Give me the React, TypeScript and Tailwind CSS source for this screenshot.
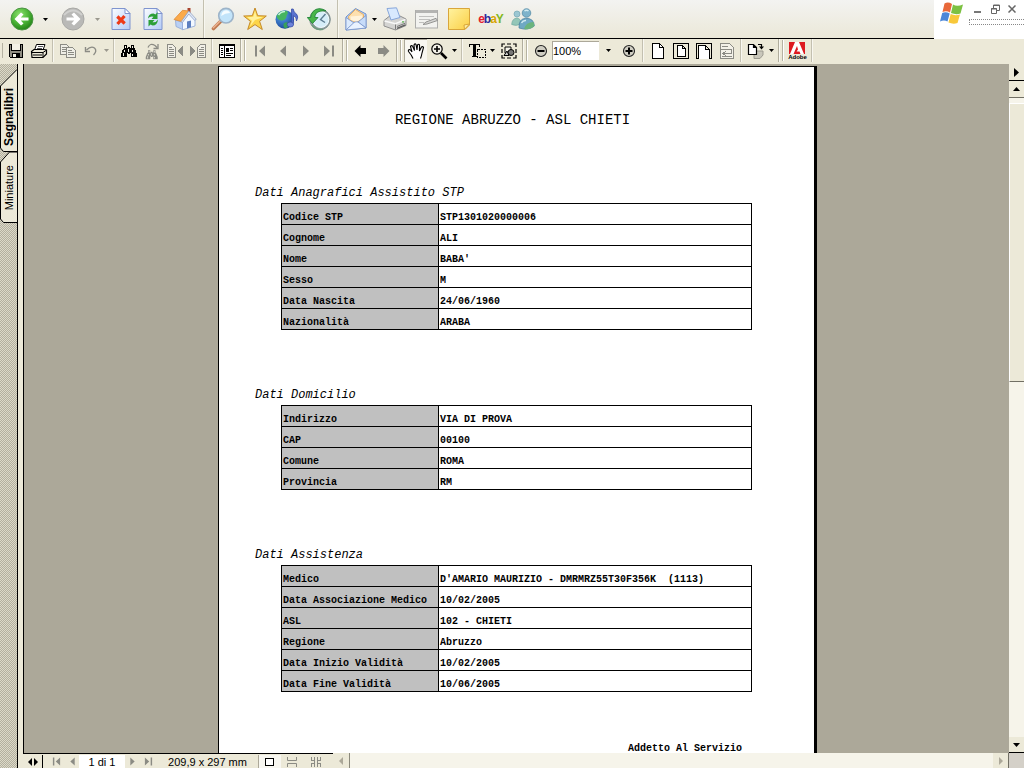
import React, { ReactNode } from "react";

const Svg = ({ s = 24, crisp = false, children }: { s?: number; crisp?: boolean; children: ReactNode }) => (
  <svg
    width={s}
    height={s}
    viewBox={`0 0 ${s} ${s}`}
    fill="none"
    shapeRendering={crisp ? "crispEdges" : "auto"}
    className="shrink-0"
    aria-hidden="true"
  >
    {children}
  </svg>
);

/* Large browser icons, 24px */

const arrow = "M4.500 12 L11 5.500 L13.500 7.500 L10.800 10.500 H18.500 V13.500 H10.800 L13.500 16.500 L11 18.500 Z";

const BackIcon = () => (
  <Svg>
    <defs>
      <radialGradient id="green" cx=".4" cy=".3" r=".75">
        <stop offset="0" stopColor="#8ee070" />
        <stop offset=".5" stopColor="#4fb83a" />
        <stop offset="1" stopColor="#1e7d12" />
      </radialGradient>
    </defs>
    <circle cx="12" cy="12" r="11" fill="url(#green)" stroke="#4c9444" strokeWidth="1" />
    <path d={arrow} fill="#fff" />
  </Svg>
);

const ForwardIcon = () => (
  <Svg>
    <circle cx="12" cy="12" r="11" fill="#b9b9b7" stroke="#a9a9a6" />
    <path d="M3 8 Q12 -1 21 8" stroke="#d0d0ce" strokeWidth="2" />
    <path d={arrow} fill="#fff" transform="matrix(-1 0 0 1 24 0)" />
  </Svg>
);

const Sheet = () => (
  <>
    <defs>
      <linearGradient id="sheet" x1="0" y1="0" x2="1" y2="1">
        <stop offset="0" stopColor="#fbfdff" />
        <stop offset="1" stopColor="#b4cbf7" />
      </linearGradient>
    </defs>
    <path d="M3 1.500 H16 L21 6.500 V22.500 H3 Z" fill="url(#sheet)" stroke="#7f94cf" />
    <path d="M16 1.500 V6.500 H21 Z" fill="#fff" stroke="#7f94cf" />
  </>
);

const StopIcon = () => (
  <Svg>
    <Sheet />
    <path d="M8.300 9.500 L15.700 16.500 M15.500 9 L8.500 17" stroke="#ee3a17" strokeWidth="3.200" />
  </Svg>
);

const RefreshIcon = () => (
  <Svg>
    <Sheet />
    <path d="M7 11.500 Q7.500 6.500 12.500 6.500 L14.500 7.500 L16.500 5 V12 H10.500 L12.500 9.800 Q9 9 7 11.500 Z" fill="#2c9f38" />
    <path d="M17 12.500 Q16.500 18.500 11.500 18.500 L9.500 17.500 L7.500 19.500 V13 H13.500 L11.500 15.200 Q15 16 17 12.500 Z" fill="#2c9f38" />
  </Svg>
);

const HomeIcon = () => (
  <Svg>
    <path d="M2.500 13 L9.500 15.500 V22.500 L3 19.500 Z" fill="#b9d0f4" stroke="#8ba5d5" strokeWidth=".8" />
    <path d="M9.500 15 L16 6.500 L22 12.500 V19 L9.500 22.800 Z" fill="#f3f8ff" stroke="#8ba5d5" strokeWidth=".8" />
    <path d="M14.500 1 H17.500 V6 H14.500 Z" fill="#a8442f" />
    <path d="M9.500 3.300 L16 4 L8.800 14.500 L1 12.500 Z" fill="#fbaa4a" stroke="#e08a35" strokeWidth=".8" />
    <path d="M15.800 4 L23.300 12.300 L21.500 13.300 L15.800 7 L9.300 15.500 L8.300 14.500 Z" fill="#dfe7f5" stroke="#8a9cc2" strokeWidth=".7" />
    <path d="M14 14.500 L18 13.500 V20.200 L14 21.400 Z" fill="#5d7fc0" />
  </Svg>
);

const SearchIcon = () => (
  <Svg>
    <path d="M10 14 L2.500 21.500" stroke="#c07a50" strokeWidth="3.600" strokeLinecap="round" />
    <path d="M9.500 13.700 L2.300 20.800" stroke="#ecb492" strokeWidth="1.400" strokeLinecap="round" />
    <circle cx="15" cy="8.700" r="7.300" fill="#c2e4fa" stroke="#9db4c9" strokeWidth="1.600" />
    <path d="M10.200 9 Q10.500 4 15 3.300 Q18.500 3.800 19 6 Q14 6 10.200 9" fill="#f5fcff" />
  </Svg>
);

const StarIcon = () => (
  <Svg>
    <path d="M12 1 L14.700 8.700 L23.300 9 L16.600 14.300 L19.300 22.500 L12 17.600 L4.700 22.500 L7.400 14.300 L.7 9 L9.300 8.700 Z" fill="#fdd548" stroke="#c48a2a" strokeLinejoin="round" />
    <path d="M12 4 L13.700 9.700 L20 10.300 L12 13 L7 19.500 L9 13.700 L4 10.300 L10.300 9.700 Z" fill="#fff19c" />
  </Svg>
);

const MediaIcon = () => (
  <Svg>
    <defs>
      <radialGradient id="globe" cx=".35" cy=".3" r=".8">
        <stop offset="0" stopColor="#58a3ec" />
        <stop offset="1" stopColor="#153f94" />
      </radialGradient>
    </defs>
    <circle cx="9.800" cy="12.500" r="9.300" fill="url(#globe)" />
    <path d="M1.500 9 Q5 2.500 12 4 Q14 6 11.500 8.500 Q12 12 7.500 13.500 Q3 14 1.500 9" fill="#45b560" />
    <path d="M9 16 Q13 14 14.500 17 Q13 21 10 21.500 Q7.500 19 9 16" fill="#39a05a" />
    <path d="M3.500 8 Q6 4.500 10 4.500" stroke="#c8f3d8" strokeWidth="1.600" />
    <path d="M16.500 17 V2 H18.200 Q18.500 5.500 21.500 7 Q24 9.500 21.500 14 Q21.800 10 18.300 8.500 V17.500 Z" fill="#5a73cf" stroke="#3a4fa8" strokeWidth=".8" />
    <ellipse cx="15.300" cy="17.500" rx="3.200" ry="2.500" fill="#6d83da" stroke="#3a4fa8" strokeWidth=".8" />
  </Svg>
);

const HistoryIcon = () => (
  <Svg>
    <circle cx="13" cy="12.500" r="10.300" fill="#8f9ea0" stroke="#7b8c8d" />
    <circle cx="13.800" cy="12.500" r="8" fill="#d6edf8" stroke="#f4fbfd" />
    <path d="M18.500 7 L13.500 12.500 L18 15.500" stroke="#5d7d92" strokeWidth="1.400" />
    <path d="M19 3.800 Q11 -.8 6 4.500 Q3.500 7.500 3.800 10.500 H.3 L5.500 16.500 L11 10.500 H7.800 Q8 5.500 13 4.200 Q16 3.600 19 3.800 Z" fill="#48b649" stroke="#24863a" strokeWidth=".9" />
    <path d="M5 18 Q9 23.500 16 22.300" stroke="#6f9d7f" strokeWidth="1.500" />
  </Svg>
);

const MailIcon = () => (
  <Svg>
    <path d="M2 10 L11.500 1.500 L22 7 V21 L2 23 Z" fill="#b6d2f6" stroke="#7091c9" />
    <path d="M4.500 9.500 L11.500 2.500 L19.500 7.500 V11.500 L12.500 15 L5 13 Z" fill="#fde0b0" stroke="#eab063" />
    <path d="M6.500 9.500 L18 8.500 V12 L12 15 L7 13 Z" fill="#fff3dc" />
    <path d="M2 10.500 L10 16 L2 23 Z" fill="#dcebfd" stroke="#7895cc" strokeWidth=".8" />
    <path d="M22 8.500 L14 15 L22 21 Z" fill="#c7dcf9" stroke="#7895cc" strokeWidth=".8" />
    <path d="M2 23 L10 15.500 Q12 14.300 14 15 L22 21 Z" fill="#eaf3ff" stroke="#7895cc" strokeWidth=".8" />
  </Svg>
);

const PrinterIcon = () => (
  <Svg>
    <path d="M1 13.500 L6 9.500 L17 9 L23 12 V18.500 L12.500 23 L1 19 Z" fill="#d4d4d2" stroke="#8f8f8f" />
    <path d="M4 1.500 L13.500 .8 L17 10.500 L8 13 Z" fill="#d8e9fe" stroke="#87a6da" />
    <path d="M1.500 14 L12.500 16.800 L22.500 12.500" stroke="#f8f8f8" strokeWidth="1.500" />
    <path d="M12.500 17.500 V22.500 M14 19.500 L22 16.300" stroke="#7a7a7a" />
    <path d="M14 21.300 L22.500 17.800" stroke="#5d5d5d" strokeWidth="1.300" />
    <circle cx="20" cy="14.800" r=".9" fill="#55b34b" />
  </Svg>
);

const EditIcon = () => (
  <Svg>
    <rect x=".500" y="3.500" width="22" height="17.500" fill="#f2f2ef" stroke="#adadab" />
    <rect x="1" y="3" width="21" height="3" fill="#b4b4b2" />
    <path d="M4 9.500 H19 M4 12.500 H15 M4 15.500 H9" stroke="#c0c0be" />
    <path d="M8 17.500 L11 15 L21 11.300 L22.500 13.500 L12 17 Z" fill="#d5d5d3" stroke="#8b8b89" strokeWidth=".9" />
  </Svg>
);

const NoteIcon = () => (
  <Svg>
    <defs>
      <linearGradient id="note" x1="0" y1="0" x2="1" y2="1">
        <stop offset="0" stopColor="#fff3a0" />
        <stop offset="1" stopColor="#fbcf45" />
      </linearGradient>
    </defs>
    <path d="M1.500 1.500 H22.500 V18 L18 22.500 H1.500 Z" fill="url(#note)" stroke="#d9a63a" />
    <path d="M22.500 17 L17 18 L17.500 22.500 Z" fill="#fff0a5" stroke="#d9a63a" />
  </Svg>
);

const EbayIcon = () => (
  <span className="flex font-['Liberation_Sans',sans-serif] text-[12px] leading-4 font-bold" aria-hidden="true">
    <span className="text-[#e4202c]">e</span>
    <span className="-ml-px text-[#2b2b9b]">b</span>
    <span className="-ml-px text-[#d8a400]">a</span>
    <span className="-ml-px text-[#83b81a]">Y</span>
  </span>
);

const MessengerIcon = () => (
  <Svg>
    <circle cx="6" cy="7" r="3" fill="#9cc7d2" stroke="#75a7b5" strokeWidth=".7" />
    <path d="M.7 17.500 Q1 11.500 6 11 Q10 11.500 10 17 Q5 19.500 .7 17.500" fill="#94c6b8" stroke="#72aaa0" strokeWidth=".7" />
    <circle cx="15.500" cy="6" r="4.300" fill="#7eb3cb" stroke="#4f87a2" strokeWidth=".7" />
    <path d="M8 21 Q7.500 12 14.500 11.300 Q23 11 23.300 19 Q17 24 8 21" fill="#6fa9c4" stroke="#447b9c" strokeWidth=".7" />
    <path d="M13.500 4 Q15.500 2.300 17.500 4 M10.500 16 Q12 13.300 15 13.500" stroke="#d3ecf2" strokeWidth="1.400" />
    <path d="M13 22 Q15 15 22.500 15 Q24 18 22.500 20 Q18 23 13 22" fill="#6bb47d" />
  </Svg>
);

/* Small document toolbar icons, 18px */

const K = "#000";
const G = "#8b8b84";

const Small = ({ children, crisp = true }: { children: ReactNode; crisp?: boolean }) => (
  <Svg s={18} crisp={crisp}>{children}</Svg>
);

const SaveIcon = () => (
  <Small>
    <path d="M2 2 H16 V16 H3 L2 15 Z" fill={K} />
    <path d="M3 3 H4 V9 H14 V3 H15 V15 H3 Z" fill="#8f8d82" />
    <rect x="5" y="2" width="8" height="6" fill="#f4f2e6" />
    <path d="M4 8.500 H14 M4.500 2 V9 M13.500 2 V9" stroke={K} />
    <rect x="5" y="11" width="8" height="4" fill={K} />
    <rect x="6" y="12" width="3" height="3" fill="#f4f2e6" />
  </Small>
);
const PrintIcon = () => (
  <Small crisp={false}>
    <path d="M6.500 2.500 H15 L13 8 H4.500 Z" fill="#fff" stroke={K} />
    <path d="M8 4.500 H13 M7 6.500 H12" stroke="#555" />
    <path d="M1.500 9.500 L4 7.500 H14 L16.500 8 V12 L13 15.500 H2 Z" fill="#ece9d8" stroke={K} strokeWidth="1.200" />
    <path d="M2 10.500 H13 L16 8.500 M3 13 H12 M13 10.500 V15" stroke={K} />
  </Small>
);
const CopyIcon = () => (
  <Small>
    <path d="M1.500 2.500 H7.500 L10.500 5.500 V12.500 H1.500 Z" stroke={G} fill="#efeee6" />
    <path d="M3 5.500 H7 M3 7.500 H7 M3 9.500 H7" stroke={G} />
    <path d="M7.500 5.500 H13.500 L16.500 8.500 V15.500 H7.500 Z" stroke={G} fill="#efeee6" />
    <path d="M9 8.500 H13 M9 10.500 H15 M9 12.500 H15" stroke={G} />
  </Small>
);
const UndoIcon = () => (
  <Small crisp={false}>
    <path d="M4.500 8 Q9 3.500 12.500 6 Q15.500 9 11.500 13" stroke={G} strokeWidth="1.300" />
    <path d="M3.500 5 V9.500 H8" stroke={G} strokeWidth="1.400" />
  </Small>
);
const Binoculars = ({ c }: { c: string }) => (
  <>
    <path d="M4 3 H7 V6 H8 V5 H10 V6 H11 V3 H14 V6 L15 7 L17 12 V15 H11 V11 H10 V12 H8 V11 H7 V15 H1 V12 L3 7 L4 6 Z" fill={c} />
    <path d="M5.500 4 V6 M12.500 4 V6 M4.500 8 V10 M3.500 11 V14 M12.500 8 V10 M12.500 12 V14 M8.500 7 V10" stroke="#f3f1e5" />
  </>
);
const FindIcon = () => <Small><Binoculars c={K} /></Small>;
const FindNextIcon = () => (
  <Small crisp={false}>
    <g transform="translate(2 6) scale(.75)"><Binoculars c={G} /></g>
    <path d="M5 5.500 Q7 .5 12 3.500 L14 5.500 M15 2 V6.500 H10.500" stroke={G} strokeWidth="1.300" />
  </Small>
);
const ResultDoc = ({ flip = false }: { flip?: boolean }) => (
  <Small>
    <g transform={flip ? "matrix(-1 0 0 1 18 0)" : undefined}>
      <path d="M1.500 2.500 H6.500 L9.500 5.500 V15.500 H1.500 Z" stroke={G} fill="#f1efe6" />
      <path d="M3 5.500 H6 M3 7.500 H8 M3 9.500 H8 M3 11.500 H8 M3 13.500 H8" stroke={G} />
      <path d="M17 4 V14 L11 9 Z" fill={G} />
    </g>
  </Small>
);
const PanelIcon = () => (
  <Small>
    <rect x="1.500" y="2.500" width="15" height="13" fill="#fff" stroke={K} />
    <path d="M1 3.500 H17 M6.500 3 V15 M3 6.500 H5 M3 8.500 H5 M3 10.500 H5 M3 12.500 H5 M8 11.500 H15 M8 13.500 H13 M12 6.500 H15 M12 8.500 H15" stroke={K} />
    <rect x="8" y="6" width="3" height="4" fill={K} />
  </Small>
);
const NavIcon = ({ bar = false, flip = false, s = 18 }: { bar?: boolean; flip?: boolean; s?: number }) => (
  <svg width={s} height={s} viewBox="0 0 18 18" className="shrink-0" aria-hidden="true">
    <g transform={flip ? "matrix(-1 0 0 1 18 0)" : undefined} fill={G}>
      {bar ? <path d="M4 3.500 H6 V14.500 H4 Z M14 3.500 V14.500 L8 9 Z" /> : <path d="M12 3.500 V14.500 L6 9 Z" />}
    </g>
  </svg>
);
const BigArrow = ({ c, flip = false }: { c: string; flip?: boolean }) => (
  <Small crisp={false}>
    <path d="M2.500 9 L8.500 3 V6 H14 V12 H8.500 V15 Z" fill={c} transform={flip ? "matrix(-1 0 0 1 18 0)" : undefined} />
  </Small>
);
const HandIcon = () => (
  <Small crisp={false}>
    <path
      d="M6 16.500 Q5 13.500 1.500 9.500 Q1 7.500 2.500 7.500 Q4 8 5 10 L3.500 4.500 Q4 3 5.500 4 L7.500 8.500 L7 3 Q8 1 9 2.500 L10 8 L10.500 3 Q12 1.500 12.500 3 L12.500 9 L14.500 5 Q16 4 16.500 5.500 L15 11 Q14.500 14 13.500 16.500"
      fill="#fff" stroke={K} strokeWidth="1.100"
    />
  </Small>
);
const ZoomIcon = () => (
  <Small crisp={false}>
    <circle cx="7" cy="7" r="5.200" fill="#f5f3ea" stroke={K} strokeWidth="1.200" />
    <path d="M4 7 H10 M7 4 V10" stroke={K} strokeWidth="1.600" />
    <path d="M11 11 L16.500 16.500" stroke={K} strokeWidth="2.600" />
  </Small>
);
const TextSelectIcon = () => (
  <Small>
    <path d="M1 2 H12 V5 H11 V3 H8 V14 H9 V15 H4 V14 H5 V3 H2 V5 H1 Z" fill={K} />
    <rect x="9.500" y="7.500" width="8" height="8" stroke={K} strokeDasharray="2 1" />
  </Small>
);
const SnapshotIcon = () => (
  <Small crisp={false}>
    <path d="M2 5 V2 H5 M7 2 H11 M13 2 H16 V5 M16 7 V11 M16 13 V16 H13 M11 16 H7 M5 16 H2 V13 M2 11 V7" stroke={K} strokeWidth="1.200" />
    <path d="M5 5 H11 V11 H5 Z" fill="#f5f3ea" stroke={K} />
    <circle cx="11" cy="10.500" r="3" fill="#777" stroke={K} />
    <path d="M4 13.500 L7 9 L9 13.500 Z" fill="#ccc" stroke={K} />
  </Small>
);
const RoundIcon = ({ plus = false }: { plus?: boolean }) => (
  <Small crisp={false}>
    <circle cx="9" cy="9" r="5.500" fill="#cfcdc2" stroke="#222" strokeWidth="1.100" />
    <path d="M5.500 9 H12.500" stroke={K} strokeWidth="2" />
    {plus && <path d="M9 5.500 V12.500" stroke={K} strokeWidth="2" />}
  </Small>
);
const PageIcon = () => (
  <Small>
    <path d="M3.500 1.500 H10.500 L14.500 5.500 V16.500 H3.500 Z" fill="#fff" stroke={K} />
    <path d="M10.500 1.500 V5.500 H14.500" stroke={K} />
  </Small>
);
const FitPageIcon = () => (
  <Small>
    <rect x="1.500" y="1.500" width="15" height="15" fill="#ece9d8" stroke={K} />
    <path d="M5.500 3.500 H10.500 L13.500 6.500 V14.500 H5.500 Z M10.500 3.500 V6.500 H13.500" fill="#fff" stroke={K} />
  </Small>
);
const FitWidthIcon = () => (
  <Small>
    <rect x="1.500" y="1.500" width="15" height="15" fill="#ece9d8" stroke={K} />
    <path d="M3.500 16.500 V3.500 H10.500 L14.500 7.500 V16.500 M10.500 3.500 V7.500 H14.500" fill="#fff" stroke={K} />
  </Small>
);
const ReflowIcon = () => (
  <Small>
    <path d="M2.500 1.500 H11.500 L15.500 5.500 V16.500 H2.500 Z" fill="#f3f1e8" stroke={G} />
    <path d="M4 4.500 H10 M2 7.500 H13 V11.500 H6 M8 9 L5 11.500 L8 14 M4 14.500 H14" stroke={G} />
  </Small>
);
const RotateIcon = () => (
  <Small crisp={false}>
    <path d="M7 9 H16 V13 L13 16.500 H7 Z" fill="#c9c7bb" stroke="#9d9b91" />
    <path d="M1.500 2.500 H6.500 L9.500 5.500 V12.500 H1.500 Z M6.500 2.500 V5.500 H9.500" fill="#fff" stroke={K} strokeWidth="1.200" />
    <path d="M11 2.500 H14.500 V5" stroke={K} strokeWidth="1.200" />
    <path d="M12 4.500 H17 L14.500 7.500 Z" fill={K} />
  </Small>
);
const AdobeIcon = () => (
  <span className="flex flex-col items-center" aria-hidden="true">
    <svg width="16" height="12" viewBox="0 0 16 12">
      <rect width="16" height="12" fill="#dd1a20" />
      <path d="M6 0 H10 L15 12 H11.500 L10.500 9.500 H7.500 L9 7.500 L8 4 L4.500 12 H1 Z" fill="#fff" />
    </svg>
    <span className="font-['Liberation_Sans',sans-serif] text-[6px] leading-[6px] font-bold">Adobe</span>
  </span>
);

const Caret = ({ off = false }: { off?: boolean }) => (
  <svg width="5" height="3" viewBox="0 0 5 3" className="shrink-0" aria-hidden="true">
    <path d="M0 0 H5 L2.500 3 Z" fill={off ? "#9a988e" : "#000"} />
  </svg>
);

const Btn = ({ label, w, children, cls = "" }: { label: string; w: string; children: ReactNode; cls?: string }) => (
  <button type="button" aria-label={label} title={label} className={`flex h-full shrink-0 items-center justify-center ${w} ${cls}`}>
    {children}
  </button>
);

const Sep = () => (
  <span className="flex h-full w-[6px] shrink-0 justify-center">
    <span className="h-full w-[2px] border-l border-[#c3c0b0] bg-[#f8f7f0]" />
  </span>
);
const Grip = () => (
  <span className="flex h-full w-[10px] shrink-0 gap-[2px] pl-[2px]">
    <span className="h-full w-[2px] border-l border-[#b0ad9d] bg-[#f8f7f0]" />
    <span className="my-px w-[2px] border-l border-[#b5b2a2] bg-white" />
  </span>
);

const W8 = "w-8";
const W = "w-[23px]";

const BrowserBar = () => (
  <header className="flex h-[39px] shrink-0 bg-white">
    <nav aria-label="Browser" className="flex grow items-center border-b border-black bg-linear-to-b from-[#f3f3f1] to-[#ebe8d8] pl-[6px]">
      <Btn label="Indietro" w={W8}><BackIcon /></Btn>
      <Btn label="Cronologia indietro" w="w-[14px]"><Caret /></Btn>
      <Btn label="Avanti" w="w-[42px]"><ForwardIcon /></Btn>
      <Btn label="Cronologia avanti" w="w-[6px]"><Caret off /></Btn>
      <span className="w-[5px] shrink-0" />
      <Btn label="Termina" w={W8}><StopIcon /></Btn>
      <Btn label="Aggiorna" w={W8}><RefreshIcon /></Btn>
      <Btn label="Pagina iniziale" w={W8}><HomeIcon /></Btn>
      <Sep />
      <Btn label="Cerca" w={W8}><SearchIcon /></Btn>
      <Btn label="Preferiti" w={W8}><StarIcon /></Btn>
      <Btn label="Multimedia" w={W8}><MediaIcon /></Btn>
      <Btn label="Cronologia" w={W8}><HistoryIcon /></Btn>
      <Sep />
      <Btn label="Posta" w="w-[30px]"><MailIcon /></Btn>
      <Btn label="Opzioni posta" w="w-[6px]"><Caret /></Btn>
      <span className="w-[2px] shrink-0" />
      <Btn label="Stampa pagina" w={W8}><PrinterIcon /></Btn>
      <Btn label="Modifica" w={W8}><EditIcon /></Btn>
      <Btn label="Note" w={W8}><NoteIcon /></Btn>
      <Btn label="eBay" w={W8}><EbayIcon /></Btn>
      <Btn label="Messenger" w={W8}><MessengerIcon /></Btn>
    </nav>
    <div className="flex w-[90px] shrink-0 gap-[5px] pl-[6px]">
      <svg width="24" height="24" viewBox="0 0 24 24" className="mt-px shrink-0" aria-hidden="true">
        <path d="M4.500 2.500 Q8 .5 12 3 L10 11.500 Q6.500 9.500 2.500 11 Z" fill="#e8683a" />
        <path d="M13 3.500 Q17 6 23 3.500 L20.500 12.500 Q16 14 11 12 Z" fill="#7cc142" />
        <path d="M2.200 12 Q6 10.500 9.700 12.500 L7.500 20.500 Q4 18.500 0 20.500 Z" fill="#4a86d8" />
        <path d="M10.700 13 Q15 15 20 13.500 L17.500 22 Q13 23.500 8.500 21.500 Z" fill="#f8c83a" />
      </svg>
      <div className="flex grow flex-col">
        <div className="flex h-[19px] items-center justify-between pr-2 pb-[2px] pl-[5px]">
          <button type="button" aria-label="Riduci a icona">
            <svg width="8" height="8" viewBox="0 0 8 8"><path d="M0 6 H7 V8 H0 Z" fill="#777" /></svg>
          </button>
          <button type="button" aria-label="Ripristina">
            <svg width="9" height="10" viewBox="0 0 9 10" fill="none" stroke="#666"><path d="M.5 4.500 H5.500 V9.500 H.5 Z M2.500 4 V1 H8.500 V6.500 H6 M2 1.500 H9 M0 5 H6" /></svg>
          </button>
          <button type="button" aria-label="Chiudi">
            <svg width="8" height="8" viewBox="0 0 8 8" stroke="#666" strokeWidth="1.500"><path d="M.5 .5 L7.500 7.500 M7.500 .5 L.5 7.500" /></svg>
          </button>
        </div>
        <div className="h-[6px] border-y border-l border-dotted border-[#888]" />
      </div>
    </div>
  </header>
);

const DocumentBar = () => (
  <nav aria-label="Documento" className="flex h-[25px] shrink-0 items-center bg-[#ece9d8] pb-[2px]">
    <span className="flex h-full w-1 shrink-0 justify-center"><span className="my-1 border-l border-[#b5b2a2]" /></span>
    <Btn label="Salva" w={W}><SaveIcon /></Btn>
    <Btn label="Stampa" w={W}><PrintIcon /></Btn>
    <Sep />
    <Btn label="Copia" w={W}><CopyIcon /></Btn>
    <Btn label="Annulla" w={W}><UndoIcon /></Btn>
    <Btn label="Opzioni annulla" w="w-[9px]"><Caret off /></Btn>
    <Sep />
    <Btn label="Trova" w={W}><FindIcon /></Btn>
    <Btn label="Trova successivo" w={W}><FindNextIcon /></Btn>
    <Btn label="Risultato precedente" w={W}><ResultDoc /></Btn>
    <Btn label="Risultato successivo" w={W}><ResultDoc flip /></Btn>
    <Sep />
    <Btn label="Riquadro di navigazione" w={W}><PanelIcon /></Btn>
    <Grip />
    <Btn label="Prima pagina" w={W}><NavIcon bar /></Btn>
    <Btn label="Pagina precedente" w={W}><NavIcon /></Btn>
    <Btn label="Pagina successiva" w={W}><NavIcon flip /></Btn>
    <Btn label="Ultima pagina" w={W}><NavIcon bar flip /></Btn>
    <Grip />
    <Btn label="Vista precedente" w="w-[22px]"><BigArrow c="#000" /></Btn>
    <Btn label="Vista successiva" w="w-[22px]"><BigArrow c="#8b8b84" flip /></Btn>
    <Grip />
    <Btn label="Mano" w={W} cls="border-t border-l border-[#aca899] bg-[#f8f7f1]"><HandIcon /></Btn>
    <Btn label="Zoom" w={W}><ZoomIcon /></Btn>
    <Btn label="Opzioni zoom" w="w-[9px]"><Caret /></Btn>
    <Sep />
    <Btn label="Selezione testo" w={W}><TextSelectIcon /></Btn>
    <Btn label="Opzioni selezione" w="w-[9px]"><Caret /></Btn>
    <Btn label="Istantanea" w={W}><SnapshotIcon /></Btn>
    <Grip />
    <Btn label="Riduci" w="w-[22px]"><RoundIcon /></Btn>
    <input
      aria-label="Ingrandimento"
      defaultValue="100%"
      className="h-[19px] w-[47px] shrink-0 border-t border-l border-[#aca899] bg-white font-['Liberation_Sans',sans-serif] text-[11px] outline-none"
    />
    <Btn label="Scegli ingrandimento" w="w-[18px]"><Caret /></Btn>
    <Btn label="Ingrandisci" w={W}><RoundIcon plus /></Btn>
    <Sep />
    <Btn label="Dimensione reale" w={W}><PageIcon /></Btn>
    <Btn label="Adatta pagina" w={W}><FitPageIcon /></Btn>
    <Btn label="Adatta larghezza" w={W}><FitWidthIcon /></Btn>
    <Btn label="Ridisponi" w={W}><ReflowIcon /></Btn>
    <Sep />
    <Btn label="Ruota" w={W}><RotateIcon /></Btn>
    <Btn label="Opzioni rotazione" w="w-[9px]"><Caret /></Btn>
    <Grip />
    <Btn label="Adobe" w={W}><AdobeIcon /></Btn>
    <Sep />
  </nav>
);

const hatch = "bg-[repeating-conic-gradient(#b3b09f_0_25%,#dcd9c8_0_50%)] bg-size-[2px_2px]";
const track = "bg-[#f6f4ea]";

const SideTabs = () => (
  <aside className={`flex w-[18px] shrink-0 flex-col border-r border-black pt-[5px] ${hatch}`}>
    <button type="button" className="relative flex h-[83px] w-[17px] items-center justify-center pt-[14px] pl-px">
      <svg width="17" height="83" viewBox="0 0 17 83" className="absolute inset-0" aria-hidden="true">
        <path d="M17 .5 L.5 17 V79 L3.500 82.500 H17" fill="#ece9d8" stroke="#000" />
      </svg>
      <span className="relative rotate-180 text-[12px] leading-4 font-bold [writing-mode:vertical-rl]">Segnalibri</span>
    </button>
    <button type="button" className="relative flex h-[71px] w-[17px] items-center justify-center pl-px">
      <svg width="17" height="71" viewBox="0 0 17 71" className="absolute inset-0" aria-hidden="true">
        <path d="M17 0 H9.500 L.5 10 V67 L3.500 70.500 H17" fill="#ece9d8" stroke="#000" />
      </svg>
      <span className="relative rotate-180 text-[11px] leading-4 [writing-mode:vertical-rl]">Miniature</span>
    </button>
  </aside>
);

type Row = [string, string];
const sections: { title: string; rows: Row[] }[] = [
  {
    title: "Dati Anagrafici Assistito STP",
    rows: [
      ["Codice STP", "STP1301020000006"],
      ["Cognome", "ALI"],
      ["Nome", "BABA'"],
      ["Sesso", "M"],
      ["Data Nascita", "24/06/1960"],
      ["Nazionalità", "ARABA"],
    ],
  },
  {
    title: "Dati Domicilio",
    rows: [
      ["Indirizzo", "VIA DI PROVA"],
      ["CAP", "00100"],
      ["Comune", "ROMA"],
      ["Provincia", "RM"],
    ],
  },
  {
    title: "Dati Assistenza",
    rows: [
      ["Medico", "D'AMARIO MAURIZIO - DMRMRZ55T30F356K  (1113)"],
      ["Data Associazione Medico", "10/02/2005"],
      ["ASL", "102 - CHIETI"],
      ["Regione", "Abruzzo"],
      ["Data Inizio Validità", "10/02/2005"],
      ["Data Fine Validità", "10/06/2005"],
    ],
  },
];

const Page = () => (
  <article className="h-full w-[599px] border-t border-r-3 border-l border-black bg-white pt-[43px] font-['Liberation_Mono',monospace] text-black">
    <h1 className="pr-2 text-center text-[14px] leading-5">REGIONE ABRUZZO - ASL CHIETI</h1>
    <div className="flex flex-col gap-[55px] pt-[53px]">
      {sections.map((s) => (
        <section key={s.title}>
          <h2 className="pl-9 text-[12px] leading-5 italic">{s.title}</h2>
          <div className="px-[62px]">
            <table className="w-full table-fixed border-collapse text-[10px] leading-3 font-bold">
              <colgroup>
                <col className="w-[157px]" />
                <col />
              </colgroup>
              <tbody>
                {s.rows.map(([k, v]) => (
                  <tr key={k}>
                    <th scope="row" className="border border-black bg-[#c0c0c0] pt-2 pl-px text-left whitespace-pre">{k}</th>
                    <td className="border border-black pt-2 pl-px whitespace-pre">{v}</td>
                  </tr>
                ))}
              </tbody>
            </table>
          </div>
        </section>
      ))}
    </div>
    <p className="mt-[50px] pr-[72px] text-right text-[10px] leading-[14px] font-bold">Addetto Al Servizio</p>
  </article>
);

const VerticalScroll = () => (
  <div className={`flex w-[15px] shrink-0 flex-col ${track}`}>
    <Btn label="Apri riquadro" w="w-full" cls="max-h-[17px] min-h-[17px] border-b border-black bg-[#ece9d8]">
      <svg width="5" height="9" viewBox="0 0 5 9"><path d="M0 0 L5 4.500 L0 9 Z" /></svg>
    </Btn>
    <Btn label="Scorri su" w="w-full" cls="max-h-[17px] min-h-[17px] border-b border-[#716f64] bg-[#ece9d8]">
      <svg width="7" height="4" viewBox="0 0 7 4"><path d="M0 4 L3.500 0 L7 4 Z" /></svg>
    </Btn>
    <div className="flex grow flex-col pt-[5px]">
      <div className="h-[44%] border-t border-b border-l border-t-white border-b-[#716f64] border-l-white bg-[#ece9d8]" />
    </div>
    <Btn label="Scorri giù" w="w-full" cls="max-h-[16px] min-h-[16px] border-b border-black bg-[#ece9d8]">
      <svg width="7" height="4" viewBox="0 0 7 4"><path d="M0 0 H7 L3.500 4 Z" /></svg>
    </Btn>
  </div>
);

const StatusBar = () => (
  <footer className="flex h-[15px] shrink-0 items-stretch text-[11px] leading-[14px]">
    <div className="flex w-[310px] shrink-0 items-center border-t border-black bg-[#ece9d8] pt-px">
      <Btn label="Mostra o nascondi riquadro" w="w-[20px]" cls="border-r border-black">
        <svg width="10" height="8" viewBox="0 0 10 8"><path d="M4 0 V8 L0 4 Z M6 0 V8 L10 4 Z" /></svg>
      </Btn>
      <Btn label="Prima pagina" w="w-[20px]" cls="ml-[3px]"><NavIcon bar s={13} /></Btn>
      <Btn label="Pagina precedente" w="w-[13px]"><NavIcon s={13} /></Btn>
      <input
        aria-label="Pagina corrente"
        defaultValue="1 di 1"
        className="h-full w-[46px] shrink-0 bg-white text-center outline-none"
      />
      <Btn label="Pagina successiva" w="w-[14px]"><NavIcon flip s={13} /></Btn>
      <Btn label="Ultima pagina" w="w-[18px]"><NavIcon bar flip s={13} /></Btn>
      <span className="w-[101px] shrink-0 text-center whitespace-nowrap">209,9 x 297 mm</span>
      <Btn label="Pagina singola" w="w-[23px]" cls="border-l border-[#aca899] bg-[#f8f7f1]">
        <svg width="10" height="10" viewBox="0 0 10 10" shapeRendering="crispEdges"><path d="M.5 1.500 H8.500 V8.500 H.5 Z" fill="#fff" stroke="#000" /></svg>
      </Btn>
      <Btn label="Continua" w="w-[22px]">
        <svg width="10" height="10" viewBox="0 0 10 10" fill="none" stroke="#8b8b84"><path d="M.5 0 V3.500 H9.500 V0 M.5 10 V6.500 H9.500 V10" /></svg>
      </Btn>
      <Btn label="Continua a due" w="w-[26px]">
        <svg width="10" height="10" viewBox="0 0 10 10" fill="none" stroke="#8b8b84"><path d="M3.500 0 V10 M6.500 0 V10 M0 3.500 H4 M6 3.500 H10 M0 6.500 H4 M6 6.500 H10 M.5 0 V3 M9.500 0 V3 M.5 7 V10 M9.500 7 V10" /></svg>
      </Btn>
    </div>
    <Btn label="Scorri a sinistra" w="w-[17px]" cls="border-r border-[#8b897c] bg-[#ece9d8]">
      <svg width="4" height="8" viewBox="0 0 4 8"><path d="M4 0 V8 L0 4 Z" fill="#aca899" /></svg>
    </Btn>
    <div className={`grow ${track}`} />
    <Btn label="Scorri a destra" w="w-[16px]" cls="border-r border-[#716f64] bg-[#ece9d8]">
      <svg width="4" height="8" viewBox="0 0 4 8"><path d="M0 0 V8 L4 4 Z" fill="#aca899" /></svg>
    </Btn>
    <div className="w-[15px] shrink-0 bg-[#d4d0c8]" />
  </footer>
);

export default function App() {
  return (
    <div className="flex h-screen flex-col overflow-hidden bg-[#ece9d8] font-['Liberation_Sans',sans-serif] text-black">
      <BrowserBar />
      <DocumentBar />
      <div className="flex min-h-0 grow">
        <SideTabs />
        <div className="w-[5px] shrink-0 bg-[#ece9d8]" />
        <div className="flex min-w-0 grow flex-col">
          <div className="flex min-h-0 grow">
            <main className="flex grow justify-center overflow-hidden border-l border-black bg-[#aca899] pt-[2px] pl-[2px]">
              <Page />
            </main>
            <VerticalScroll />
          </div>
          <StatusBar />
        </div>
      </div>
    </div>
  );
}
